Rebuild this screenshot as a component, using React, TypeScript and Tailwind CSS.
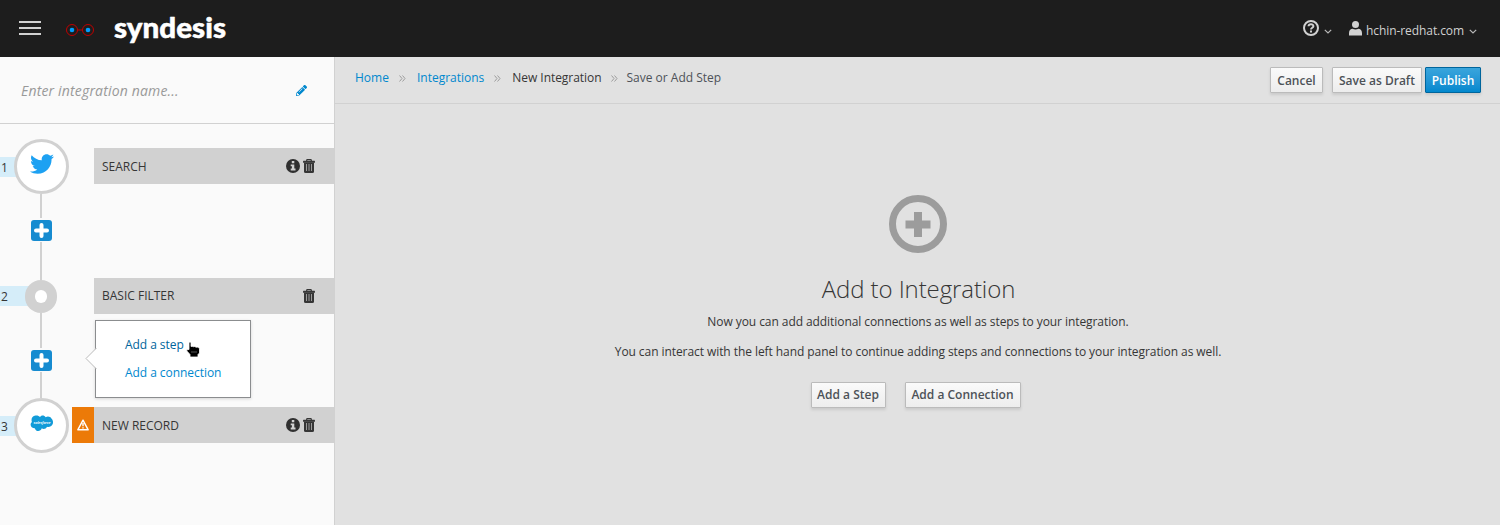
import React from "react";
import { FaTwitter, FaPencilAlt } from "react-icons/fa";

function Chevron({ className }: { className: string }) {
  return (
    <svg className={className} width="8" height="5" viewBox="0 0 8 5" fill="none">
      <path d="M.8 .8L4 4L7.200 .8" stroke="#b8b8b8" strokeWidth="1.200" />
    </svg>
  );
}

function Info() {
  return (
    <svg width="14" height="14" viewBox="0 0 14 14">
      <circle cx="7" cy="7" r="7" fill="#303030" />
      <path d="M5.800 2H8.300V4.200H5.800ZM4.700 5.400H8.300V9.600H9.500V11.500H4.700V9.600H5.900V7.200H4.700Z" fill="#d1d1d1" />
    </svg>
  );
}

function Trash() {
  return (
    <svg width="12" height="14" viewBox="0 0 12 14" fill="none">
      <path d="M3.700 2V1.200Q3.700 .6 4.300 .6H7.700Q8.300 .6 8.300 1.200V2" stroke="#363636" strokeWidth="1.200" />
      <rect x="0" y="1.700" width="12" height="2" rx=".5" fill="#363636" />
      <path d="M1 3.500H11V12.500Q11 14 9.500 14H2.500Q1 14 1 12.500Z" fill="#363636" />
      <path d="M3.500 5V12M6 5V12M8.500 5V12" stroke="#a8a8a8" strokeWidth=".9" />
    </svg>
  );
}

function Cloud() {
  return (
    <svg width="24" height="17" viewBox="0 0 24 17">
      <path d="M10 2C11-.2 14.500-.1 15.600 2.200C18 .9 20.300 1.700 21.400 3.400C23.800 5.500 23.500 10 20.800 11.200C19.300 12.100 18 12 17 11.700C16 14.200 13 14.300 11.800 13.300C10.500 17 6 17 4.800 13.200C1.500 13.500 .3 11 .7 8.800C1 7.800 1.500 7.200 1.900 6.900C.8 4 2.200 .8 5.500 .5C7.700 .3 9.200 1 10 2Z" fill="#119bd8" />
      <text x="3.600" y="9.300" fontFamily="Open Sans" fontSize="4" fontStyle="italic" fontWeight="600" fill="#fff" textLength="17">salesforce</text>
    </svg>
  );
}

function Plus() {
  return (
    <div className="flex h-[24px] w-[22px] items-center justify-center bg-[#fafafa]">
      <svg width="21" height="21" viewBox="0 0 21 21">
        <rect width="21" height="21" rx="3" fill="#168bd0" />
        <path d="M10.500 5V16M5 10.500H16" stroke="#fff" strokeWidth="4" strokeLinecap="round" />
      </svg>
    </div>
  );
}

type StepProps = { n: string; label: string; icon?: React.ReactNode; info?: boolean; warn?: boolean };

function Step({ n, label, icon, info, warn }: StepProps) {
  return (
    <div className="flex h-[55px] items-center">
      <span className={`-mr-[42px] h-5 w-[42px] shrink-0 bg-[#d5edf9] pl-px text-[12px] leading-[21px] ${icon ? "" : "mb-[2px]"}`}>{n}</span>
      <div className="relative ml-[14px] flex w-[55px] shrink-0 justify-center">
        {icon ? (
          <div className="flex size-[55px] items-center justify-center rounded-full border-[3px] border-[#d1d1d1] bg-white pb-[5px]">{icon}</div>
        ) : (
          <div className="flex h-[55px] w-full flex-col items-center pr-px">
            <div className="w-[2px] flex-1 bg-[#d1d1d1]" />
            <div className="flex h-[33px] w-8 items-center justify-center rounded-full bg-[#d1d1d1]">
              <div className="h-[13px] w-3 rounded-full bg-white" />
            </div>
            <div className="w-[2px] flex-1 bg-[#d1d1d1]" />
          </div>
        )}
      </div>
      <div className="-mt-[2px] ml-[3px] flex h-9 flex-1">
        <div className={warn ? "flex w-[22px] items-center justify-center bg-[#ec7a08]" : "w-[22px]"}>
          {warn && (
            <svg width="12" height="12" viewBox="0 0 12 12" fill="none" stroke="#fff">
              <path d="M6 1.200L11.200 10.800H.8Z" strokeWidth="1.400" strokeLinejoin="round" />
              <path d="M6 4V7.300M6 8.300V9.600" strokeWidth="1.400" />
            </svg>
          )}
        </div>
        <div className="flex flex-1 items-center bg-[#d1d1d1] pl-2 pr-[19px] pt-px">
          <span className={icon ? "flex-1 pt-px text-[12px]" : "flex-1 pb-px text-[12px]"}>{label}</span>
          <div className="flex items-center gap-[3px]">
            {info && <Info />}
            <Trash />
          </div>
        </div>
      </div>
    </div>
  );
}

function Rail() {
  return (
    <div className="flex w-[82px] flex-col items-center">
      <div className="h-[24px] w-[2px] bg-[#d1d1d1]" />
      <Plus />
      <div className="w-[2px] flex-1 bg-[#d1d1d1]" />
    </div>
  );
}

function Button({ children, primary, className }: { children: React.ReactNode; primary?: boolean; className: string }) {
  const tone = primary
    ? "border-[#00659c] from-[#39a5dc] to-[#0088ce] text-white"
    : "border-[#bbb] from-[#fafafa] to-[#ededed] text-[#4d5258]";
  return (
    <button className={`h-[26px] whitespace-nowrap rounded-[1px] border bg-linear-to-b text-[12px] font-semibold shadow-[0_2px_3px_rgba(3,3,3,0.1)] ${tone} ${className}`}>
      {children}
    </button>
  );
}

function Separator({ className }: { className: string }) {
  return (
    <svg className={className} width="7" height="7" viewBox="0 0 7 7" fill="none" stroke="#9c9c9c" strokeWidth="1">
      <path d="M.5 .5L3 3.500L.5 6.500M3.500 .5L6 3.500L3.500 6.500" />
    </svg>
  );
}

export default function App() {
  return (
    <div className="flex h-[525px] w-[1500px] flex-col overflow-hidden bg-[#e1e1e1] font-['Open_Sans',sans-serif] text-[12px] text-[#363636]">
      <header className="flex h-[57px] shrink-0 items-center bg-[#1d1d1d] text-[#d1d1d1]">
        <div className="-mt-px ml-[19px] flex w-[22px] flex-col gap-[4px]">
          <div className="h-[2px] bg-[#d1d1d1]" />
          <div className="h-[2px] bg-[#d1d1d1]" />
          <div className="h-[2px] bg-[#d1d1d1]" />
        </div>
        <svg className="ml-[25px] mt-[3px]" width="28" height="12" viewBox="0 0 28 12" fill="none">
          <circle cx="6" cy="6" r="5.500" stroke="#c00000" />
          <circle cx="22" cy="6" r="5.500" stroke="#c00000" />
          <path d="M11.500 6H16.500" stroke="#c00000" />
          <circle cx="6" cy="6" r="2.300" fill="#009dff" />
          <circle cx="22" cy="6" r="2.300" fill="#009dff" />
        </svg>
        <svg className="ml-[19px]" width="116" height="40" viewBox="0 0 116 40">
          <text x="1" y="29" fontFamily="Lato" fontWeight="900" fontSize="28" fill="#fff" stroke="#fff" strokeWidth=".5" strokeLinejoin="round" textLength="112" lengthAdjust="spacingAndGlyphs">syndesis</text>
        </svg>
        <div className="ml-auto flex items-center pr-[23px]">
          <svg className="-mt-px" width="16" height="16" viewBox="0 0 16 16" fill="none">
            <circle cx="8" cy="8" r="7" stroke="#d1d1d1" strokeWidth="2" />
            <path d="M5.500 6.300C5.700 3.500 10.400 3.500 10.400 6.200C10.400 7.800 8 7.800 8 9.500M8 10.600V12.500" stroke="#d1d1d1" strokeWidth="2" />
          </svg>
          <Chevron className="ml-[5px] mt-[5px]" />
          <svg className="ml-[17px]" width="13" height="15" viewBox="0 0 13 15" fill="#d1d1d1">
            <circle cx="6.500" cy="3.500" r="3.500" />
            <path d="M0 14.500V12C0 9 2 7.800 3.500 7.800Q6.500 9.300 9.500 7.800C11 7.800 13 9 13 12V14.500Z" />
          </svg>
          <span className="ml-[4px] mt-[4px] text-[12px] tracking-[-0.08px]">hchin-redhat.com</span>
          <Chevron className="ml-[5px] mt-[5px]" />
        </div>
      </header>
      <div className="flex min-h-0 flex-1">
        <aside className="flex w-[335px] shrink-0 flex-col border-r border-[#d1d1d1] bg-[#fafafa]">
          <div className="flex h-[67px] shrink-0 items-center border-b border-[#d1d1d1] pl-[21px] pr-[27px]">
            <span className="flex-1 text-[14px] italic tracking-[0.17px] text-[#999]">Enter integration name...</span>
            <FaPencilAlt size={11} color="#0088ce" />
          </div>
          <div className="flex flex-col pt-[15px]">
            <Step n="1" label="SEARCH" info icon={<FaTwitter size={24} color="#1da1f2" />} />
            <div className="flex h-[75px]"><Rail /></div>
            <Step n="2" label="BASIC FILTER" />
            <div className="relative flex h-[74px]">
              <Rail />
              <div className="absolute left-[95px] top-[-4px] flex h-[78px] w-[156px] flex-col border border-[#8b8d8f] bg-white pl-[29px] pt-[15px] text-[12px] tracking-[-0.05px] shadow-[0_1px_3px_rgba(0,0,0,0.15)]">
                <span className="h-[28px] leading-[18px] text-[#00659c]">Add a step</span>
                <span className="leading-[18px] text-[#0088ce]">Add a connection</span>
                <svg className="absolute left-[-11px] top-[27px]" width="12" height="22" viewBox="0 0 12 22">
                  <path d="M11.500 0L1 10.500L11.500 21" fill="#fff" stroke="#bbb" />
                </svg>
                <svg className="absolute left-[90px] top-[20px]" width="15" height="17" viewBox="0 0 15 17">
                  <path d="M3 1.500Q4 .3 5 1.500V5.500Q6 4.800 7.500 5.700Q9 5 10 6.200Q12 5.500 13.500 7.500V12L12 13.500V16H4V13.500L.8 10Q.2 7.800 3 8.500Z" fill="#000" stroke="#fff" strokeWidth=".8" />
                  <path d="M6 10V12M8 10V12M10 10V12" stroke="#777" strokeWidth=".7" />
                </svg>
              </div>
            </div>
            <Step n="3" label="NEW RECORD" info warn icon={<Cloud />} />
          </div>
        </aside>
        <main className="flex flex-1 flex-col">
          <div className="flex h-[47px] shrink-0 items-start border-b border-[#d1d1d1] pl-5 pr-[19px] pt-[10px]">
            <nav className="flex h-[22px] flex-1 items-center whitespace-nowrap">
              <span className="text-[#0088ce]">Home</span>
              <Separator className="ml-[10px] mr-[11px]" />
              <span className="text-[#0088ce]">Integrations</span>
              <Separator className="ml-[10px] mr-[11px]" />
              <span className="tracking-[-0.05px]">New Integration</span>
              <Separator className="ml-[10px] mr-[8px]" />
              <span className="text-[#4d5258]">Save or Add Step</span>
            </nav>
            <div className="flex">
              <Button className="w-[53px] pt-px">Cancel</Button>
              <Button className="ml-[9px] w-[90px] pt-px">Save as Draft</Button>
              <Button primary className="ml-[3px] w-[56px] pt-px">Publish</Button>
            </div>
          </div>
          <section className="flex flex-col items-center pt-[91px]">
            <svg width="58" height="58" viewBox="0 0 58 58" fill="none" stroke="#9c9c9c">
              <circle cx="29" cy="29" r="25.500" strokeWidth="7" />
              <path d="M29 17V42M16.500 29.500H41.500" strokeWidth="8" />
            </svg>
            <h1 className="mt-[20px] pl-[2px] text-[24px] font-light leading-8 tracking-[-0.1px]">Add to Integration</h1>
            <p className="mt-[7px] pl-px leading-5 tracking-[-0.07px]">Now you can add additional connections as well as steps to your integration.</p>
            <p className="mt-[10px] pl-px leading-5 tracking-[-0.07px]">You can interact with the left hand panel to continue adding steps and connections to your integration as well.</p>
            <div className="mt-[20px] flex gap-[19px] pr-[4px]">
              <Button className="w-[75px]">Add a Step</Button>
              <Button className="w-[116px]">Add a Connection</Button>
            </div>
          </section>
        </main>
      </div>
    </div>
  );
}
